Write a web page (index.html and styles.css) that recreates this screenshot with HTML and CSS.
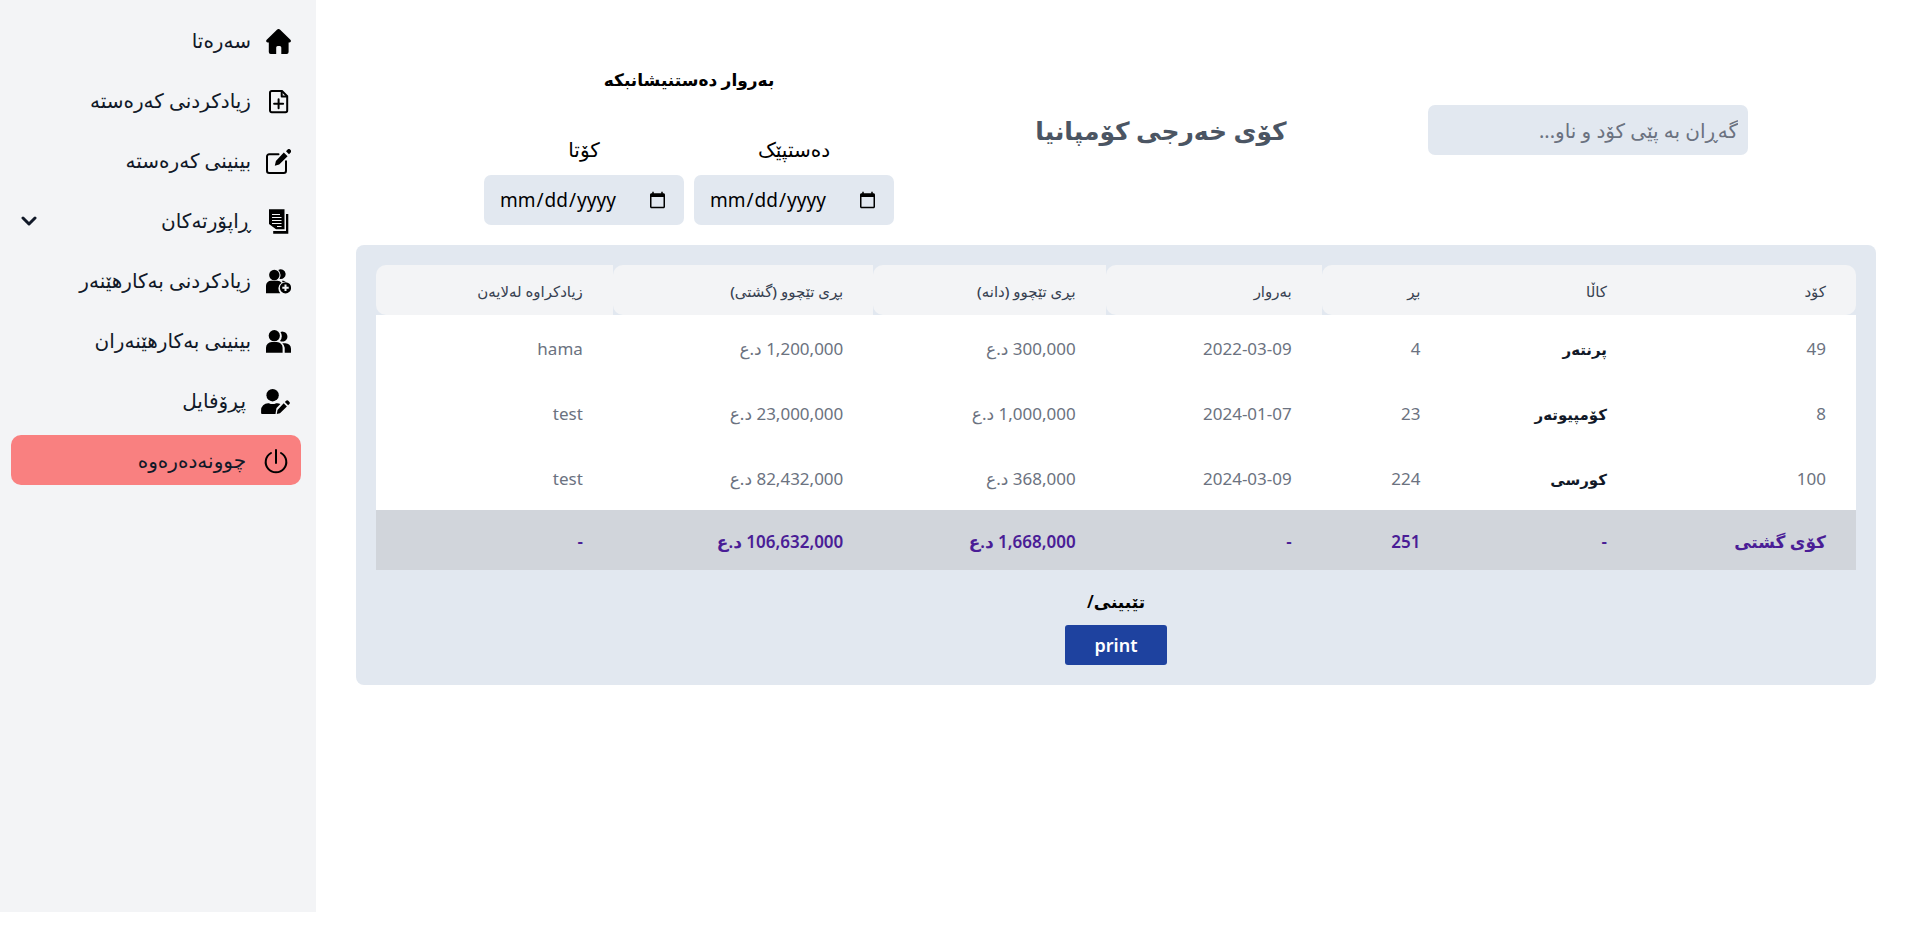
FILE: index.html
```html
<!DOCTYPE html>
<html lang="ckb" dir="rtl">
<head>
<meta charset="utf-8">
<meta name="viewport" content="width=device-width,initial-scale=1">
<title>کۆی خەرجی کۆمپانیا</title>
<link rel="stylesheet" href="styles.css">
</head>
<body>
<div class="layout">
  <aside class="sidebar">
    <nav class="menu">
      <a class="item" href="#">
        <svg class="icon" viewBox="0 0 25 25"><path d="M11.200.6a2 2 0 0 1 2.700 0l10.500 10.200c1 1 .5 2.700-1 2.700h-.8v9.600a1.900 1.900 0 0 1-1.900 1.900H15.300v-6.600a1.500 1.500 0 0 0-1.500-1.500h-2.100a1.500 1.500 0 0 0-1.500 1.500V25H4.700a1.900 1.900 0 0 1-1.900-1.900v-9.600H1.700c-1.500 0-2-1.700-1-2.700z"/></svg>
        <span>سەرەتا</span>
      </a>
      <a class="item" href="#">
        <svg class="icon line" viewBox="0 0 25 25"><path d="M5.700 2h10.300l5.200 5.200v14.300a1.700 1.700 0 0 1-1.700 1.700H5.700A1.700 1.700 0 0 1 4 21.500V3.700A1.700 1.700 0 0 1 5.700 2z"/><path d="M15.700 2.500v5h5M12.600 10.200v9M8.100 14.700h9"/></svg>
        <span>زیادکردنی کەرەستە</span>
      </a>
      <a class="item" href="#">
        <svg class="icon" viewBox="0 0 25 25"><path class="stroke" d="M12.500 5.200H3.200A2.200 2.200 0 0 0 1 7.400v14.400A2.200 2.200 0 0 0 3.200 24h14.600a2.200 2.200 0 0 0 2.200-2.200v-9.500"/><path d="M17.800 3.500l3.800 3.800-8.400 8.200-4.400 1.300 1.100-4.900zM20 2.200l1.400-1.400a2 2 0 0 1 3 0 2.100 2.100 0 0 1 0 3L23 5.300z"/></svg>
        <span>بینینی کەرەستە</span>
      </a>
      <button class="item" type="button">
        <svg class="icon" viewBox="0 0 25 25"><path d="M3 .3h15.500v20H10l-7-5.300zM20 5h2.300v19.700H7.200v-2.600H20z"/><path class="cut" d="M6 5.500h8M6 8.500h9.500M6 11.500h9.500M6 14.500h9.500M11 17.500h4.500"/></svg>
        <span>ڕاپۆرتەکان</span>
        <svg class="chevron" viewBox="0 0 16 10"><path d="M2 2l6 6 6-6"/></svg>
      </button>
      <a class="item" href="#">
        <svg class="icon" viewBox="0 0 25 25"><circle cx="8.300" cy="6" r="5.200"/><path d="M12.300 1.100a4.800 4.800 0 1 1 1.200 8.700 7.400 7.400 0 0 0-1.200-8.700zM0 24.300v-7.600a5 5 0 0 1 5-5h6.500a5 5 0 0 1 4 2 7 7 0 0 0-1.200 10.600zM15.800 11.800h1.500a4.500 4.500 0 0 1 2.500.8 7 7 0 0 0-3 .7z"/><circle cx="19.500" cy="18.800" r="5.600"/><path class="cut plus" d="M19.500 15.600v6.400M16.300 18.800h6.400"/></svg>
        <span>زیادکردنی بەکارهێنەر</span>
      </a>
      <a class="item" href="#">
        <svg class="icon" viewBox="0 0 25 25"><circle cx="8.300" cy="6.700" r="5.600"/><path d="M14.500 3a5 5 0 1 1-.500 9 8 8 0 0 0 .5-9zM0 23.800v-5.100a5.700 5.700 0 0 1 5.700-5.700h5.200a5.700 5.700 0 0 1 5.700 5.700v5.100zM16.300 14.200h3.100a5.600 5.600 0 0 1 5.600 5.600v4h-6.300v-5a7 7 0 0 0-2.400-4.600z"/></svg>
        <span>بینینی بەکارهێنەران</span>
      </a>
      <a class="item" href="#">
        <svg class="icon wide" viewBox="0 0 30 25"><circle cx="11.600" cy="6.200" r="6.200"/><path d="M1 25a1 1 0 0 1-.900-1v-2.800a7 7 0 0 1 7-7h.800a8.500 8.500 0 0 0 7.300 0h1a7 7 0 0 1 3.200.8L16 18.500a3 3 0 0 0-.7 1.300L14.500 25zM22.700 14.200l3.200 3.200-6.900 6.800-3.200.7.700-3.900zM23.900 13l1.200-1.200a1.500 1.500 0 0 1 2.200 0l1.100 1.100a1.500 1.500 0 0 1 0 2.200l-1.300 1.200z"/></svg>
        <span>پڕۆفایل</span>
      </a>
      <a class="item logout" href="#">
        <svg class="icon wide power" viewBox="0 0 30 25"><path d="M15 1v13M20 4a10.300 10.300 0 1 1-10 0"/></svg>
        <span>چوونەدەرەوە</span>
      </a>
    </nav>
  </aside>

  <main class="content">
    <div class="toolbar">
      <input class="field search" type="text" placeholder="گەڕان بە پێی کۆد و ناو..." aria-label="گەڕان">
      <h1 class="title">کۆی خەرجی کۆمپانیا</h1>
      <div class="dates">
        <h2 class="dates-title">بەروار دەستنیشانبکە</h2>
        <div class="dates-row">
          <label class="date">دەستپێک
            <input class="field" type="date" dir="ltr">
          </label>
          <label class="date">کۆتا
            <input class="field" type="date" dir="ltr">
          </label>
        </div>
      </div>
    </div>

    <div class="panel">
      <table class="report">
        <colgroup>
          <col class="c-code"><col class="c-name"><col class="c-qty"><col class="c-date"><col class="c-unit"><col class="c-total"><col class="c-user">
        </colgroup>
        <thead>
          <tr><th>کۆد</th><th>کاڵا</th><th>بڕ</th><th>بەروار</th><th>بڕی تێچوو (دانە)</th><th>بڕی تێچوو (گشتی)</th><th>زیادکراوە لەلایەن</th></tr>
        </thead>
        <tbody>
          <tr><td>49</td><td class="name">پرنتەر</td><td>4</td><td>2022-03-09</td><td>300,000 د.ع</td><td>1,200,000 د.ع</td><td>hama</td></tr>
          <tr><td>8</td><td class="name">کۆمپیوتەر</td><td>23</td><td>2024-01-07</td><td>1,000,000 د.ع</td><td>23,000,000 د.ع</td><td>test</td></tr>
          <tr><td>100</td><td class="name">کورسی</td><td>224</td><td>2024-03-09</td><td>368,000 د.ع</td><td>82,432,000 د.ع</td><td>test</td></tr>
        </tbody>
        <tfoot>
          <tr><th>کۆی گشتی</th><td>-</td><td>251</td><td>-</td><td>1,668,000 د.ع</td><td>106,632,000 د.ع</td><td>-</td></tr>
        </tfoot>
      </table>
      <p class="note">تێبینی/</p>
      <button class="print" type="button">print</button>
    </div>
  </main>
</div>
</body>
</html>
```
FILE: styles.css
```css
*{box-sizing:border-box}
body{margin:0;background:#fff;color:#000;font-family:"Segoe UI","Noto Sans","DejaVu Sans",sans-serif;font-size:20px;line-height:30px}
h1,h2,p{margin:0}
button,input{font:inherit;color:inherit}

.layout{display:flex;flex-direction:row-reverse;align-items:flex-start}

/* sidebar */
.sidebar{flex:0 0 316px;min-height:calc(100vh - 20px);padding:15px 15px 15px 11px;background:#f3f4f6}
.menu{display:flex;flex-direction:column;gap:10px}
.item{display:flex;align-items:center;gap:15px;width:100%;height:50px;padding:2px 10px 0;border:0;border-radius:10px;background:none;color:#111928;text-decoration:none;cursor:pointer}
.logout{background:#f98080}
.icon{flex:none;width:25px;height:25px;fill:#000}
.icon.wide{width:30px}
.line,.power{fill:none;stroke:#000;stroke-width:2;stroke-linecap:round;stroke-linejoin:round}
.stroke{fill:none;stroke:#000;stroke-width:2;stroke-linecap:round}
.cut{fill:none;stroke:#f3f4f6;stroke-width:1}
.plus{stroke-width:2}
.chevron{width:16px;height:10px;margin-right:auto;fill:none;stroke:#111928;stroke-width:3;stroke-linecap:round;stroke-linejoin:round}

/* toolbar */
.content{flex:1;min-width:0;padding:35px 33px 35px 40px}
.toolbar{display:grid;grid-template-columns:320px 1fr 410px;align-items:center;padding:0 128px;margin-bottom:20px}
.field{height:50px;border:0;border-radius:7px;background:#e2e8f0}
.search{width:100%;padding:0 10px}
.search::placeholder{color:#6b7280;opacity:1}
.title{color:#4b5563;font-size:25px;font-weight:600;line-height:40px;text-align:center}
.dates{display:flex;flex-direction:column;gap:40px;padding-top:30px;text-align:center}
.dates-title{font-size:17px;font-weight:600;line-height:30px}
.dates-row{display:flex;gap:10px}
.date{display:flex;flex:1;flex-direction:column;gap:10px;min-width:0}
.date .field{width:100%;min-width:0;padding:0 15px;font-size:19px}

/* report */
.panel{display:flex;flex-direction:column;align-items:center;padding:20px;border-radius:8px;background:#e2e8f0}
.report{width:100%;table-layout:fixed;border-collapse:collapse;text-align:right;font-size:17px}
.c-code{width:14.8%}
.c-name{width:12.6%}
.c-qty{width:8.7%}
.c-date{width:14.6%}
.c-unit{width:15.7%}
.c-total{width:17.6%}
.c-user{width:16%}
.report th,.report td{padding:2px 30px 0;white-space:nowrap}
.report thead th{height:50px;background:#f3f4f6;color:#374151;font-size:15px;font-weight:500}
.report thead th:first-child{border-radius:0 10px 10px 0}
.report thead th:nth-child(n+3){border-radius:10px 0 0 10px}
.report tbody td{height:65px;background:#fff;color:#6b7280}
.report tbody .name{color:#111928;font-size:15px;font-weight:600}
.report tfoot th,.report tfoot td{height:60px;padding-top:4px;background:#d1d5db;color:#4a1d96;font-weight:600}
.note{margin-top:17px;font-size:17px;font-weight:600}
.print{height:40px;margin-top:8px;padding:0 30px;border:0;border-radius:3px;background:#1e429f;color:#fff;font-size:18px;font-weight:600;cursor:pointer}
```
